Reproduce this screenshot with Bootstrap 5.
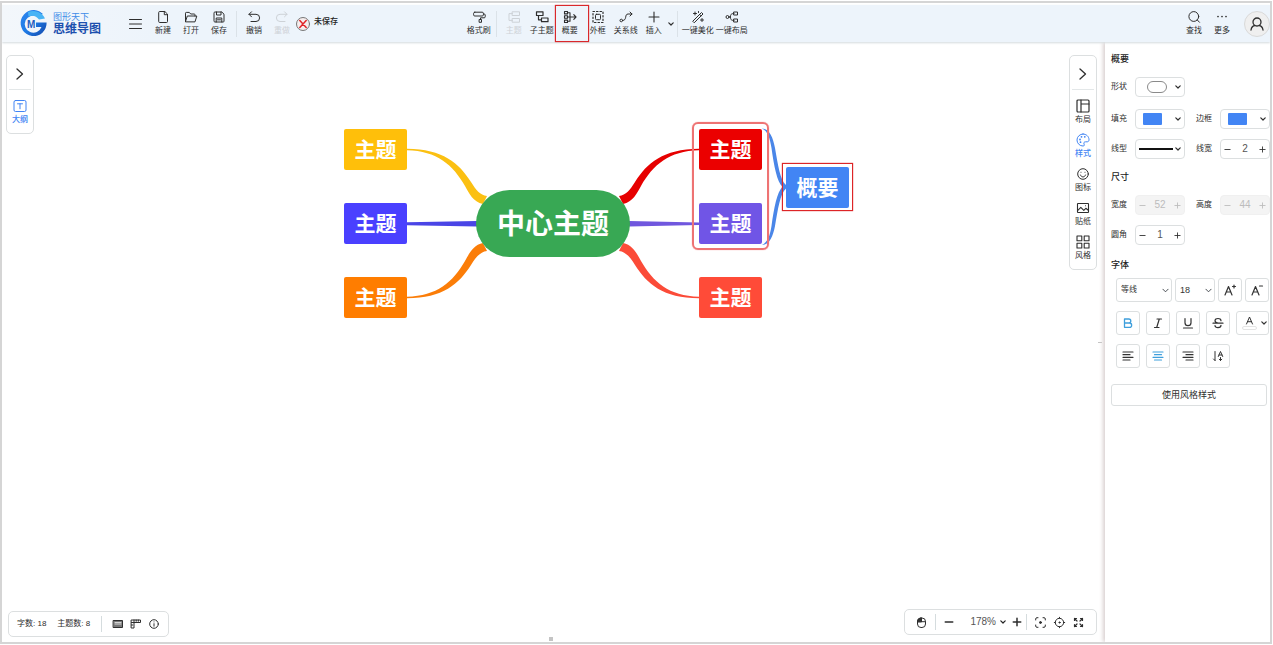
<!DOCTYPE html>
<html lang="zh-CN">
<head>
<meta charset="utf-8">
<meta name="viewport" content="width=device-width, initial-scale=1">
<title>图形天下 思维导图</title>
<link href="https://cdn.jsdelivr.net/npm/bootstrap@5.3.0/dist/css/bootstrap.min.css" rel="stylesheet">
<style>
  :root { --ink: #2e2e2e; --line: #dcdfe0; --blue: #4285f4; --mark-red: #d9282b; }
  body { font-family: "Liberation Sans", "Noto Sans CJK SC", sans-serif; font-size: 8px; line-height: 12px; color: var(--ink); background: #fff; }
  button { font: inherit; color: inherit; background: none; border: 0; padding: 0; }
  svg { display: block; fill: none; stroke: currentColor; stroke-linecap: round; stroke-linejoin: round; overflow: visible; flex: none; }
  .app-frame { border: 2px solid #d5d5d5; margin: 1px 1px 0 0; height: calc(100vh - 2px); }

  .app-bar { height: 37px; margin-top: 2px; background: linear-gradient(90deg, #f3f7fb, #edf4fb 12%, #edf4fb); box-shadow: 0 1px 2px #d4dade; z-index: 2; }
  .bar-left { width: 36.5%; padding-left: 18px; }
  .logo { stroke: none; }
  .brand-text { margin-left: 6px; }
  .brand-top { font-size: 9px; line-height: 11px; color: #3f8ce8; }
  .brand-name { font-size: 12px; line-height: 13px; font-weight: 700; color: #1c50ae; }
  .menu-btn { margin: 0 7px 0 28px; }
  .tool { width: 28px; display: flex; flex-direction: column; align-items: center; gap: 1px; white-space: nowrap; position: relative; }
  .tool.wide { width: 34px; }
  .tool svg { width: 14px; height: 14px; }
  .tool:disabled { color: #cdd2d7; }
  .tool.marked::after { content: ""; position: absolute; inset: -5px -5px -5px -1px; border: 1px solid var(--mark-red); box-shadow: 0 0 1px var(--mark-red); }
  .bar-rule { width: 1px; height: 26px; background: #dbe2e8; margin: 0 3px; }
  .save-state { color: #222; font-weight: 500; }
  .avatar { width: 26px; height: 26px; border: 1px solid #d9d9d9; background: #efefef; }

  .work { min-height: 0; }
  .board { padding: 13px 8px 5px 4px; min-width: 0; position: relative; }
  .float-box { border: 1px solid var(--line); border-radius: 5px; background: #fff; }
  .rail { width: 28px; }
  .rail .toggle { height: 34px; width: 22px; padding-top: 2px; border-bottom: 1px solid #e3e7e8; }
  .rail .tool { width: 26px; }
  .rail .tool.on { color: var(--blue); font-weight: 500; }
  .rail-tools { gap: 7px; padding: 9px 0 7px; }

  .map-area { padding-left: 3px; }
  .mind-map { position: relative; width: 418px; height: 189px; margin-top: 74px; }
  .links { position: absolute; left: 0; top: 0; stroke: none; }
  .topic { position: absolute; width: 63px; height: 41px; border-radius: 2px; color: #fff; font-size: 21px; line-height: 42px; font-weight: 700; text-align: center; }
  .topic.root { left: 132px; top: 61px; width: 154px; height: 67px; border-radius: 34px; background: #38a854; font-size: 28px; line-height: 70px; }
  .pick-range { position: absolute; left: 348px; top: -7px; width: 77px; height: 128px; border: 2px solid #ee7373; box-shadow: 0 0 1px #ee7373; border-radius: 6px; }
  .pick-summary { position: absolute; left: 438px; top: 34px; width: 71px; height: 48px; border: 1px solid #dd2527; box-shadow: 0 0 1px #dd2527; }

  .status { height: 26px; gap: 11px; padding: 0 9px 0 8px; margin-left: 2px; }
  .status .rule, .zoom-bar .rule { width: 1px; height: 16px; background: #d5dcde; }
  .zoom-bar { height: 26px; padding: 0 12px 0 11px; margin-bottom: 2px; }
  .zoom-val { font-size: 10px; color: #555; margin: 0 6px 0 16px; }
  .zoom-val svg { color: #222; }
  .grip { position: absolute; background: #c4c4c4; }

  .side { width: 165px; padding: 9px 0 0 6px; box-shadow: -2px 0 4px #d9d0d0; overflow: hidden; clip-path: inset(0 0 0 -8px); z-index: 1; gap: 10px; }
  .side h2 { font-size: 9px; line-height: 16px; font-weight: 500; margin: 0; color: #222; }
  .spaced { margin-top: 2px; }
  .rows { display: flex; gap: 11px; }
  .pair { display: flex; align-items: center; width: 74px; flex: none; }
  .pair .cap { width: 24px; flex: none; }
  .field { width: 50px; height: 20px; border: 1px solid var(--line); border-radius: 4px; background: #fff; display: flex; align-items: center; justify-content: space-between; padding: 0 3px; flex: none; }
  .field.off { background: #f4f4f4; border-color: #f0f0f0; color: #bcbcbc; }
  .field input { width: 24px; border: 0; padding: 0; background: none; text-align: center; color: #555; font-size: 10px; line-height: 12px; }
  .field.off input { color: #bcbcbc; }
  .swatch { width: 19px; height: 12px; border-radius: 1px; background: #4285f4; margin-left: 4px; }
  .shape-pill { width: 20px; height: 12px; border: 1px solid #8a8a8a; border-radius: 6px; margin-left: 8px; }
  .stroke-demo { width: 34px; height: 2px; background: #111; }
  .font-rows { display: flex; flex-direction: column; gap: 9px; padding: 5px 0 0 5px; }
  .font-row { display: flex; gap: 6px; }
  .font-row.tight { gap: 3px; }
  .sq, .side .form-select { height: 24px; border: 1px solid var(--line); border-radius: 3px; background-color: #fff; color: #333; }
  .sq { width: 24px; display: flex; align-items: center; justify-content: center; flex: none; }
  .sq.on { color: #3f9fdc; }
  .sq.ink-pick { width: 33px; gap: 4px; padding-left: 3px; }
  .ink-bar { display: block; width: 15px; height: 4px; border: 1px solid #e4e4e4; border-radius: 2px; }
  .side .form-select { font-size: 8px; line-height: 12px; padding: 0 10px 0 4px; background-size: 7px 7px; background-position: right 2px center; }
  .pick-font { width: 56px; }
  .side .pick-size { width: 40px; font-size: 9px; }
  .apply { width: 156px; height: 22px; border: 1px solid var(--line); border-radius: 3px; font-size: 9px; margin-top: 6px; }
</style>
</head>
<body>
<svg width="0" height="0" class="position-absolute" aria-hidden="true">
  <symbol id="i-down" viewBox="0 0 6 4"><path stroke-width="1.200" d="M.8.8 3 3 5.200.8"/></symbol>
  <symbol id="i-minus" viewBox="0 0 8 8"><path d="M1 4h6"/></symbol>
  <symbol id="i-plus" viewBox="0 0 8 8"><path d="M1 4h6M4 1v6"/></symbol>
  <symbol id="i-right" viewBox="0 0 8 12"><path d="M1 1l5.500 5L1 11"/></symbol>
</svg>
<div class="app-frame d-flex flex-column overflow-hidden">
  <header class="app-bar d-flex align-items-center flex-shrink-0 position-relative">
    <div class="bar-left d-flex align-items-center flex-shrink-0">
      <svg class="logo" width="27" height="27" viewBox="0 0 27 27">
        <defs><linearGradient id="lg" x1="0" y1="0" x2="1" y2="1"><stop offset="0" stop-color="#2f86ee"/><stop offset=".5" stop-color="#1e7be6"/><stop offset="1" stop-color="#1547a8"/></linearGradient></defs>
        <path fill="url(#lg)" d="M19.500 1.500A13 13 0 1 0 26.600 12.500H16v4.500h5.500A8.600 8.600 0 1 1 17.500 6.500L23 4z"/>
        <path fill="#49b4f5" d="M8 2A13 13 0 0 1 25 8.500L19 9.500A9 9 0 0 0 8.500 6.500z"/>
        <text x="7" y="17.500" font-size="10" font-weight="700" font-family="Liberation Sans" fill="#1e5fc0">M</text>
      </svg>
      <div class="brand-text">
        <div class="brand-top">图形天下</div>
        <div class="brand-name">思维导图</div>
      </div>
      <button class="menu-btn" aria-label="菜单"><svg width="13" height="10" viewBox="0 0 13 10"><path d="M.5.5h12M.5 5h12M.5 9.500h12"/></svg></button>
      <button class="tool"><svg viewBox="0 0 14 14"><path d="M8.500 1.500H3.700a1 1 0 0 0-1 1v9a1 1 0 0 0 1 1h6.800a1 1 0 0 0 1-1V4.500zM8.300 1.700v3h3"/></svg>新建</button>
      <button class="tool"><svg viewBox="0 0 14 14"><path d="M1.500 11.500V3.200a.8.800 0 0 1 .8-.8h3l1.400 1.600h3.500a.8.800 0 0 1 .8.800V6M1.500 11.500 3.300 6H12.800l-1.700 5.500z"/></svg>打开</button>
      <button class="tool"><svg viewBox="0 0 14 14"><path d="M2 2.800a.8.800 0 0 1 .8-.8h7L12 4.200v7a.8.800 0 0 1-.8.800H2.800a.8.800 0 0 1-.8-.8zM4.500 2v3h4.500V2M4.200 12V8h5.600v4M5.500 9.800h3"/></svg>保存</button>
      <div class="bar-rule"></div>
      <button class="tool"><svg viewBox="0 0 14 14"><path d="M4.500 1.800 2 4.300l2.500 2.500M2 4.300h7a3.600 3.600 0 0 1 0 7.200H4"/></svg>撤销</button>
      <button class="tool" disabled><svg viewBox="0 0 14 14"><path d="M9.500 1.800 12 4.300 9.500 6.800M12 4.300H5a3.600 3.600 0 0 0 0 7.200h5"/></svg>重做</button>
      <svg width="14" height="14" viewBox="0 0 14 14"><circle cx="7" cy="7" r="6.500" stroke="#777" fill="#f6eeee"/><path d="m3.800 3.500 6.400 7M10.200 3.500l-6.400 7" stroke="#e0262a" stroke-width="1.500"/></svg>
      <span class="save-state ms-1 mb-1 text-nowrap">未保存</span>
    </div>
    <div class="d-flex align-items-center flex-shrink-0">
      <button class="tool"><svg viewBox="0 0 14 14"><path d="M2.800 2.200h7.400a1.200 1.200 0 0 1 1.200 1.200v1.400A1.200 1.200 0 0 1 10.200 6H2.800a1.200 1.200 0 0 1-1.200-1.200V3.400a1.200 1.200 0 0 1 1.200-1.200zM11.400 4h.8a1 1 0 0 1 1 1v1.800a1 1 0 0 1-1 1H8.500v1.400M7.500 9.500h2v2.800h-2z"/></svg>格式刷</button>
      <div class="bar-rule"></div>
      <button class="tool" disabled><svg viewBox="0 0 14 14"><path d="M5.500 1.800h7v3.700h-7zM5.500 8.500h7v3.700h-7zM5.500 3.600h-3.500v6.800h3.500"/></svg>主题</button>
      <button class="tool"><svg viewBox="0 0 14 14" stroke-width="1.200"><path d="M1.500 1.800H8v3.700H1.500zM6.500 8H13v3.700H6.500zM3.500 5.500v4.300h3"/></svg>子主题</button>
      <button class="tool marked"><svg viewBox="0 0 14 14" stroke-width="1.100"><path d="M1.500 1.500h3v2.400h-3zM1.500 5.800h3v2.400h-3zM1.500 10.100h3v2.400h-3zM4.500 2.700H7v8.600H4.500M4.500 7h8.500M10.800 4.700 13 7l-2.200 2.300"/></svg>概要</button>
      <button class="tool"><svg viewBox="0 0 14 14"><path stroke-width="1.200" stroke-dasharray="1.500 2" d="M2 1.500h10v11H2z"/><rect x="4.500" y="4.300" width="5" height="5.400" rx="1"/></svg>外框</button>
      <button class="tool"><svg viewBox="0 0 14 14"><circle cx="2.300" cy="10.500" r="1.300"/><path d="M3.600 10.500c5 0 1.500-6.500 5.500-6.500H13M11 2l2 2-2 2"/></svg>关系线</button>
      <button class="tool"><svg viewBox="0 0 14 14" stroke-width="1.100"><path d="M7 2v10M2 7h10"/></svg>插入</button>
      <svg width="6" height="4"><use href="#i-down"/></svg>
      <div class="bar-rule"></div>
      <button class="tool wide"><svg viewBox="0 0 14 14"><path d="M2 11 10.500 2.500l1.500 1.500L3.500 12.500zM4 2v3M2.500 3.500h3M7.500 1.500v1M11 8.500v3M9.500 10h3M8.700 4.500l1.400 1.400"/></svg>一键美化</button>
      <button class="tool wide"><svg viewBox="0 0 14 14"><circle cx="2.500" cy="7" r="1.500"/><path d="M9 2h3.500v3H9zM9 9h3.500v3H9zM4 7h1.500M9 3.500c-3 0-3.500 1-3.500 3.500s.5 3.500 3.500 3.500"/></svg>一键布局</button>
    </div>
    <div class="d-flex align-items-center ms-auto flex-shrink-0">
      <button class="tool"><svg viewBox="0 0 14 14"><circle cx="6.800" cy="6.500" r="4.900"/><path d="m10.300 10 2.200 2.300"/></svg>查找</button>
      <button class="tool me-2"><svg viewBox="0 0 14 14"><path stroke-width="1.700" d="M3 6.500h.01M7 6.500h.01M11 6.500h.01"/></svg>更多</button>
      <button class="avatar rounded-circle d-flex align-items-center justify-content-center" aria-label="账户"><svg width="14" height="14" viewBox="0 0 14 14" stroke-width="1.300"><circle cx="7" cy="5" r="4"/><path d="M1 13c.4-2.600 2-4.300 4-4.500M13 13c-.4-2.600-2-4.300-4-4.500"/></svg></button>
    </div>
  </header>

  <div class="work d-flex flex-grow-1">
    <main class="board d-flex flex-column justify-content-between flex-grow-1">
      <div class="d-flex align-items-start">
        <nav class="rail float-box d-flex flex-column align-items-center">
          <button class="toggle d-flex align-items-center justify-content-center" aria-label="展开"><svg width="8" height="12" stroke-width="1.300"><use href="#i-right"/></svg></button>
          <div class="rail-tools d-flex flex-column">
            <button class="tool on"><svg viewBox="0 0 14 14"><rect x="1" y="1.500" width="12" height="11" rx="1.500"/><path d="M4.500 4.800h5M7 4.800v5"/></svg>大纲</button>
          </div>
        </nav>
        <div class="map-area flex-grow-1 d-flex justify-content-center">
          <div class="mind-map">
            <svg class="links" width="418" height="189" viewBox="344 129 418 189">
              <defs>
                <path id="branch" stroke="none" d="M407 148.700C443 149 459 163 471 182C476 190 480 195 487 196L483 204C473 202 469 193 465 186C453 165 437 151 407 150.300Z"/>
              </defs>
              <use href="#branch" fill="#fbc012"/>
              <use href="#branch" fill="#fb7d08" transform="translate(0 447) scale(1 -1)"/>
              <use href="#branch" fill="#e60000" transform="translate(1106 0) scale(-1 1)"/>
              <use href="#branch" fill="#fb4b38" transform="translate(1106 447) scale(-1 -1)"/>
              <path fill="#4a45e6" d="M407 222.300 477 221v5.500l-70-1.300z"/>
              <path fill="#7057de" d="M699 222.500 629 221v5.500l70-1.500z"/>
              <path fill="#4a86e8" d="M762 128.500C770 129 773 138 775 148C778 165 780 180 786 185V188.500C780 194 778 209 775 226C773 236 770 244.500 762 245C768 242 770 235 771.500 226C774 208 777 192 782.500 186.800C777 182 774 166 771.500 148C770 139 768 131 762 128.500Z"/>
            </svg>
            <div class="topic" style="left:0;top:0;background:#ffbf0a">主题</div>
            <div class="topic" style="left:0;top:74px;background:#4a40ff">主题</div>
            <div class="topic" style="left:0;top:148px;background:#ff7d00">主题</div>
            <div class="topic root">中心主题</div>
            <div class="topic" style="left:355px;top:0;background:#eb0000">主题</div>
            <div class="topic" style="left:355px;top:74px;background:#7055e6">主题</div>
            <div class="topic" style="left:355px;top:148px;background:#ff4b38">主题</div>
            <div class="topic" style="left:442px;top:38px;background:#4285f4">概要</div>
            <div class="pick-range"></div>
            <div class="pick-summary"></div>
          </div>
        </div>
        <nav class="rail float-box d-flex flex-column align-items-center">
          <button class="toggle d-flex align-items-center justify-content-center" aria-label="收起"><svg width="8" height="12" stroke-width="1.300"><use href="#i-right"/></svg></button>
          <div class="rail-tools d-flex flex-column">
            <button class="tool"><svg viewBox="0 0 14 14" stroke-width="1.200"><rect x="1" y="1" width="12" height="12" rx="1"/><path d="M5 1v12M5 5h8"/></svg>布局</button>
            <button class="tool on"><svg viewBox="0 0 14 14"><path d="M7 1a6 6 0 0 0 0 12c1.500 0 1.500-1 1-2-.5-1.300.2-2.200 1.500-2.200h1.800c1 0 1.700-.8 1.700-2C13 3.500 10.300 1 7 1z"/><path d="M4 6.500h.01M5.500 3.800h.01M8.800 3.800h.01M4.500 9.200h.01" stroke-width="1.800"/></svg>样式</button>
            <button class="tool"><svg viewBox="0 0 14 14"><circle cx="7" cy="7" r="5.300"/><path d="M4.500 8c.5 1.300 1.400 1.900 2.500 1.900S9 9.300 9.500 8M5 5.300h.01M9 5.300h.01"/></svg>图标</button>
            <button class="tool"><svg viewBox="0 0 14 14" stroke-width="1.100"><rect x="1.500" y="2.500" width="11" height="9" rx=".5"/><path d="m1.800 9.300 3-3 3 3 2-2 2.500 2M9.500 4.800h.01"/></svg>贴纸</button>
            <button class="tool"><svg viewBox="0 0 14 14" stroke-width="1.100"><path d="M1 1h4.800v4.800H1zM8.200 1H13v4.800H8.200zM1 8.200h4.800V13H1zM8.200 8.200H13V13H8.200z"/></svg>风格</button>
          </div>
        </nav>
      </div>

      <div class="d-flex align-items-end justify-content-between">
        <div class="status float-box d-flex align-items-center">
          <span>字数: 18</span><span>主题数: 8</span>
          <div class="rule"></div>
          <div class="d-flex gap-2">
            <button aria-label="快捷键"><svg width="10" height="10" viewBox="0 0 10 10"><rect x=".5" y="1.500" width="9" height="7" fill="#777"/><path stroke="#fff" stroke-width=".7" d="M2 3.500h6M2 5h6"/></svg></button>
            <button aria-label="标尺"><svg width="10" height="10" viewBox="0 0 10 10"><path d="M.5 1h9v2.500H3V9H.5zM3 1v2.500M5.200 1v1.300M7.300 1v1.300M.5 3.500H3M.5 6h1.300"/></svg></button>
            <button aria-label="信息"><svg width="10" height="10" viewBox="0 0 10 10"><circle cx="5" cy="5" r="4.300"/><path d="M5 4.700v2.500M5 2.900h.01"/></svg></button>
          </div>
        </div>
        <div class="zoom-bar float-box d-flex align-items-center">
          <button aria-label="鼠标模式"><svg width="11" height="11" viewBox="0 0 11 11"><rect x="1.500" y="1" width="8" height="9.500" rx="3.500"/><path fill="#333" d="M1.500 4.500C1.500 2 3 1 5.500 1v3.500z"/><path d="M1.500 4.700h8"/></svg></button>
          <div class="rule mx-2"></div>
          <button aria-label="缩小"><svg width="10" height="10" stroke-width="1.200"><use href="#i-minus"/></svg></button>
          <button class="zoom-val d-flex align-items-center">178%<svg width="6" height="4" class="ms-1"><use href="#i-down"/></svg></button>
          <button aria-label="放大"><svg width="10" height="10" stroke-width="1.200"><use href="#i-plus"/></svg></button>
          <div class="rule mx-1"></div>
          <div class="d-flex gap-2 ms-1">
            <button aria-label="定位中心"><svg width="11" height="11" viewBox="0 0 11 11"><path d="M.7 3V2Q.7.7 2 .7h1M8 .7h1Q10.300.7 10.300 2v1M10.300 8v1q0 1.300-1.300 1.300H8M3 10.300H2Q.7 10.300.7 9V8"/><circle cx="5.500" cy="5.500" r="1" fill="#333"/></svg></button>
            <button aria-label="适应画布"><svg width="11" height="11" viewBox="0 0 11 11"><circle cx="5.500" cy="5.500" r="4.200"/><circle cx="5.500" cy="5.500" r=".6" fill="#333"/><path d="M5.500.3v1M5.500 9.700v1M.3 5.500h1M9.700 5.500h1"/></svg></button>
            <button aria-label="全屏"><svg width="11" height="11" viewBox="0 0 11 11" stroke-width="1.200"><path d="M1.500 3.500v-2h2M1.500 1.500l2.500 2.500M7.500 1.500h2v2M9.500 1.500 7 4M1.500 7.500v2h2M1.500 9.500 4 7M7.500 9.500h2v-2M9.500 9.500 7 7"/></svg></button>
          </div>
        </div>
      </div>
      <i class="grip" style="left:547px;bottom:1px;width:4px;height:4px"></i>
      <i class="grip" style="right:3px;top:50%;width:4px;height:1px"></i>
    </main>

    <aside class="side bg-white flex-shrink-0 d-flex flex-column">
      <h2>概要</h2>
      <div class="rows">
        <div class="pair"><span class="cap">形状</span><button class="field" aria-label="形状"><span class="shape-pill"></span><svg width="6" height="4"><use href="#i-down"/></svg></button></div>
      </div>
      <div class="rows spaced">
        <div class="pair"><span class="cap">填充</span><button class="field" aria-label="填充"><span class="swatch"></span><svg width="6" height="4"><use href="#i-down"/></svg></button></div>
        <div class="pair"><span class="cap">边框</span><button class="field" aria-label="边框"><span class="swatch"></span><svg width="6" height="4"><use href="#i-down"/></svg></button></div>
      </div>
      <div class="rows">
        <div class="pair"><span class="cap">线型</span><button class="field" aria-label="线型"><span class="stroke-demo"></span><svg width="6" height="4"><use href="#i-down"/></svg></button></div>
        <div class="pair"><label class="cap" for="lw">线宽</label><div class="field"><button aria-label="减少线宽"><svg width="7" height="7"><use href="#i-minus"/></svg></button><input id="lw" type="text" value="2"><button aria-label="增加线宽"><svg width="7" height="7"><use href="#i-plus"/></svg></button></div></div>
      </div>
      <h2>尺寸</h2>
      <div class="rows">
        <div class="pair"><label class="cap" for="wd">宽度</label><div class="field off"><button disabled aria-label="减少宽度"><svg width="7" height="7"><use href="#i-minus"/></svg></button><input id="wd" type="text" value="52" disabled><button disabled aria-label="增加宽度"><svg width="7" height="7"><use href="#i-plus"/></svg></button></div></div>
        <div class="pair"><label class="cap" for="ht">高度</label><div class="field off"><button disabled aria-label="减少高度"><svg width="7" height="7"><use href="#i-minus"/></svg></button><input id="ht" type="text" value="44" disabled><button disabled aria-label="增加高度"><svg width="7" height="7"><use href="#i-plus"/></svg></button></div></div>
      </div>
      <div class="rows">
        <div class="pair"><label class="cap" for="rd">圆角</label><div class="field"><button aria-label="减少圆角"><svg width="7" height="7"><use href="#i-minus"/></svg></button><input id="rd" type="text" value="1"><button aria-label="增加圆角"><svg width="7" height="7"><use href="#i-plus"/></svg></button></div></div>
      </div>
      <div class="spaced">
        <h2>字体</h2>
        <div class="font-rows">
          <div class="font-row tight">
            <select class="form-select pick-font" aria-label="字体"><option>等线</option></select>
            <select class="form-select pick-size" aria-label="字号"><option>18</option></select>
            <button class="sq" aria-label="增大字号"><svg width="14" height="14" viewBox="0 0 14 14" stroke-width="1.200"><path d="M2 12 5.500 3.500 9 12M3.200 9h4.600M9.500 3.500h3M11 2v3"/></svg></button>
            <button class="sq" aria-label="减小字号"><svg width="14" height="14" viewBox="0 0 14 14" stroke-width="1.200"><path d="M2 12 5.500 3.500 9 12M3.200 9h4.600M9.500 3h3"/></svg></button>
          </div>
          <div class="font-row">
            <button class="sq on" aria-label="加粗"><svg width="12" height="12" viewBox="0 0 12 12" stroke-width="1.300"><path d="M2.500 2h4.300a2 2 0 0 1 0 4H2.500zM2.500 6h5a2.100 2.100 0 0 1 0 4.300h-5z"/></svg></button>
            <button class="sq" aria-label="斜体"><svg width="12" height="12" viewBox="0 0 12 12" stroke-width="1.200"><path d="M5 2h4.500M2.500 10.500H7M7.300 2 4.700 10.500"/></svg></button>
            <button class="sq" aria-label="下划线"><svg width="12" height="12" viewBox="0 0 12 12" stroke-width="1.200"><path d="M3 1.500v4.200a3 3 0 0 0 6 0V1.500M1.500 11h9"/></svg></button>
            <button class="sq" aria-label="删除线"><svg width="12" height="12" viewBox="0 0 12 12" stroke-width="1.200"><path d="M9 3.700C9 2.300 7.800 1.500 6 1.500S3 2.300 3 3.800C3 5 4 5.700 6 6.100M9 8.300C9 10 7.800 10.700 6 10.700S3 9.800 3 8.500M1 6.200h10"/></svg></button>
            <button class="sq ink-pick" aria-label="文字颜色"><span class="d-flex flex-column align-items-center"><svg width="9" height="10" viewBox="0 0 9 10"><path d="M1.500 8 4.500 1l3 7M2.500 5.700h4"/></svg><span class="ink-bar"></span></span><svg width="6" height="4"><use href="#i-down"/></svg></button>
          </div>
          <div class="font-row">
            <button class="sq" aria-label="左对齐"><svg width="12" height="10" viewBox="0 0 12 10" stroke-width="1.200"><path d="M1 1h10M1 3.700h7M1 6.300h10M1 9h7"/></svg></button>
            <button class="sq on" aria-label="居中"><svg width="12" height="10" viewBox="0 0 12 10" stroke-width="1.200"><path d="M1 1h10M2.500 3.700h7M1 6.300h10M2.500 9h7"/></svg></button>
            <button class="sq" aria-label="右对齐"><svg width="12" height="10" viewBox="0 0 12 10" stroke-width="1.200"><path d="M1 1h10M4 3.700h7M1 6.300h10M4 9h7"/></svg></button>
            <button class="sq" aria-label="文字方向"><svg width="12" height="12" viewBox="0 0 12 12"><path d="M3 1.500v9M1.500 9 3 10.500M6.300 6.500 8.500 1.500l2.200 5M7 5h3M8.500 7.500v3M7.200 9.200l1.300 1.300 1.300-1.300"/></svg></button>
          </div>
        </div>
      </div>
      <button class="apply">使用风格样式</button>
    </aside>
  </div>
</div>
<script src="https://cdn.jsdelivr.net/npm/bootstrap@5.3.0/dist/js/bootstrap.bundle.min.js"></script>
</body>
</html>
